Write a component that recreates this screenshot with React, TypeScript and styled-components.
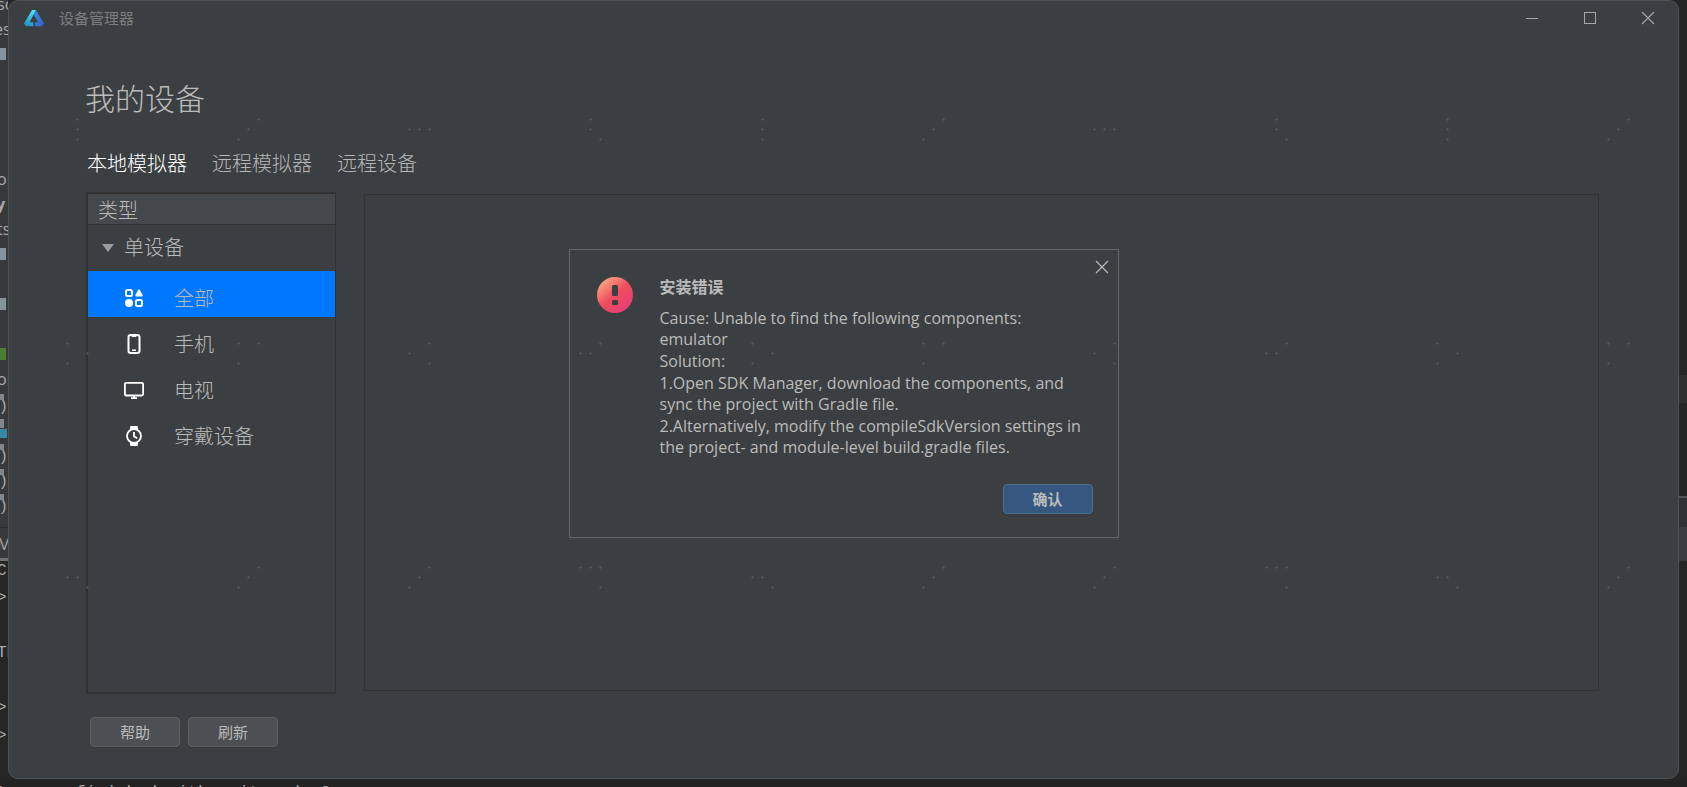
import React, { useState } from "react";
import styled, { createGlobalStyle, css } from "styled-components";

const GlobalStyle = createGlobalStyle`
  * { box-sizing: border-box; }
  body {
    margin: 0;
    background: #262626;
    color: #bbbbbb;
    font-family: "Open Sans", "Noto Sans CJK SC", sans-serif;
  }
  button { font-family: inherit; cursor: default; }
`;

/* ---------- desktop: the IDE showing round the window ---------- */

const Desktop = styled.div`
  position: relative;
  display: grid;
  grid-template-columns: 8px minmax(0, 1fr) 8px;
  grid-template-rows: minmax(779px, calc(100vh - 8px)) 8px;
  overflow: hidden;
`;

const Strip = styled.div<{ $side: "left" | "right" }>`
  position: relative;
  overflow: hidden;
  background: ${(p) =>
    p.$side === "left"
      ? "linear-gradient(#37393b 0 558px, #6e7074 558px 561px, #262626 561px)"
      : "linear-gradient(#272727 0 375px, #303030 375px 403px, #252525 403px 496px, #555 496px 498px, #303233 498px 527px, #3a3d3f 527px 561px, #262626 561px)"};
`;

const Fragment = styled.span<{ $top: number; $left: number; $bold?: boolean; $mono?: boolean }>`
  position: absolute;
  left: ${(p) => p.$left}px;
  top: ${(p) => p.$top}px;
  font-family: ${(p) => (p.$mono ? '"Liberation Mono", monospace' : "inherit")};
  font-size: 16px;
  line-height: 20px;
  font-weight: ${(p) => (p.$bold ? 700 : 400)};
  white-space: nowrap;
  color: #a7a9ab;
`;

const Block = styled.i<{ $top: number; $w: number; $h: number; $color: string }>`
  position: absolute;
  left: 0;
  top: ${(p) => p.$top}px;
  width: ${(p) => p.$w}px;
  height: ${(p) => p.$h}px;
  background: ${(p) => p.$color};
`;

const Console = styled.div`
  grid-column: 1 / -1;
  height: 8px;
  padding-top: 4px;
  overflow: hidden;
  text-indent: -6px;
  white-space: nowrap;
  font: 17px/20px "Liberation Mono", monospace;
  color: #a5a5a5;
  background: #232323;
`;

/* ---------- window ---------- */

const Window = styled.main`
  display: flex;
  flex-direction: column;
  min-width: 0;
  background: #3c3f41;
  border: 1px solid #505254;
  border-radius: 10px;
`;

const TitleBar = styled.header`
  display: flex;
  align-items: center;
  height: 34px;
  padding: 0 20px 0 15px;
`;

const AppName = styled.span`
  flex: 1;
  margin-left: 15px;
  font-size: 15px;
  line-height: 20px;
  color: #7b7d7f;
`;

const Controls = styled.div`
  display: flex;
  gap: 38px;
`;

const IconButton = styled.button`
  display: grid;
  place-items: center;
  width: 20px;
  height: 20px;
  padding: 0;
  border: 0;
  background: none;
  color: #a3a5a6;
`;

const Content = styled.div`
  flex: 1;
  display: flex;
  flex-direction: column;
  padding: 42px 79px 31px 76px;
`;

const Heading = styled.h1`
  margin: 0;
  font-size: 30px;
  line-height: 44px;
  font-weight: 300;
`;

const Tabs = styled.div`
  display: flex;
  gap: 25px;
  margin: 30px 0 15px 2px;
`;

const Tab = styled.button<{ $active?: boolean }>`
  padding: 0;
  border: 0;
  background: none;
  font-size: 20px;
  line-height: 26px;
  font-weight: 300;
  color: ${(p) => (p.$active ? "#ffffff" : "#b4b6b7")};
`;

const Panels = styled.div`
  flex: 1;
  display: flex;
  gap: 28px;
  margin-left: 1px;
`;

const Sidebar = styled.nav`
  flex: 0 0 250px;
  border: 2px solid #323232;
  border-right-width: 1px;
  font-size: 20px;
  font-weight: 300;
`;

const SidebarHead = styled.div`
  height: 31px;
  padding: 4px 0 0 10px;
  line-height: 26px;
  background: #45484a;
  border-bottom: 1px solid #323232;
`;

const treeRow = css`
  display: flex;
  align-items: center;
  width: 100%;
  height: 46px;
  border: 0;
  background: none;
  color: inherit;
  font-size: 20px;
  font-weight: 300;
  line-height: 30px;
  text-align: left;
`;

const GroupRow = styled.button`
  ${treeRow}
  gap: 10px;
  padding: 0 14px;
`;

const ItemRow = styled.button<{ $active?: boolean }>`
  ${treeRow}
  gap: 28px;
  padding: 8px 0 0 34px;
  background: ${(p) => (p.$active ? "#0077ff" : "none")};
`;

const ItemName = styled.span`
  padding-top: 2px;
`;

const Stage = styled.section`
  flex: 1;
  margin: 2px 0 3px;
  border: 1px solid #323232;
`;

const Actions = styled.footer`
  display: flex;
  gap: 8px;
  margin: 23px 0 0 5px;
`;

const Button = styled.button<{ $primary?: boolean }>`
  width: 90px;
  height: 30px;
  padding: 0;
  border: 1px solid ${(p) => (p.$primary ? "#4c708c" : "#5e6060")};
  border-radius: 4px;
  background: ${(p) => (p.$primary ? "#365880" : "#4c5052")};
  box-shadow: 0 1px 1px #36383a;
  color: #bbbbbb;
  font-size: 15px;
  font-weight: ${(p) => (p.$primary ? 700 : 400)};
  line-height: 20px;
`;

/* ---------- dialog ---------- */

const Overlay = styled.div`
  position: absolute;
  inset: 0;
  display: grid;
  place-items: center;
`;

const Dialog = styled.section`
  display: grid;
  grid-template-columns: 36px 1fr;
  column-gap: 27px;
  position: relative;
  width: 550px;
  padding: 26px 25px 23px 27px;
  background: #3c3f41;
  border: 1px solid #66696b;
`;

const DialogClose = styled(IconButton)`
  position: absolute;
  top: 7px;
  right: 6px;
  color: #bbbbbb;
`;

const DialogText = styled.div`
  font-size: 16px;
  line-height: 21px;
`;

const DialogTitle = styled.h2`
  margin: 0 0 10px;
  font-size: 16px;
  line-height: 22px;
  font-weight: 700;
`;

const Message = styled.p`
  margin: 0;

  & + & {
    margin-top: 1px;
  }
`;

const DialogActions = styled.div`
  grid-column: 1 / -1;
  display: flex;
  justify-content: flex-end;
  margin-top: 26px;
`;

const Sparkles = styled.svg`
  position: absolute;
  inset: 0;
  width: 100%;
  height: 100%;
  pointer-events: none;
`;

/* ---------- drawings ---------- */

const Logo = () => (
  <svg width="20" height="17" viewBox="0 0 20 17" aria-hidden="true">
    <defs>
      <linearGradient id="lgA" x1="0.6" y1="0" x2="0.3" y2="1">
        <stop offset="0" stopColor="#4fe3ea" />
        <stop offset="1" stopColor="#1c93c8" />
      </linearGradient>
      <linearGradient id="lgB" x1="0" y1="0" x2="1" y2="1">
        <stop offset="0" stopColor="#2f8fe6" />
        <stop offset="1" stopColor="#3a5fc9" />
      </linearGradient>
    </defs>
    <path d="M8 0h4L5.600 12.200H9.400V16.200H2L0 13.500z" fill="url(#lgA)" />
    <path d="M12 0L20 13.500L18 16.200H11V12.200H14.200L9.600 4.600z" fill="url(#lgB)" />
  </svg>
);

const Minimize = () => (
  <svg width="14" height="14" viewBox="0 0 14 14" stroke="currentColor">
    <path d="M1 7.500H13" />
  </svg>
);

const Maximize = () => (
  <svg width="14" height="14" viewBox="0 0 14 14" stroke="currentColor" fill="none">
    <rect x="1.500" y="1.500" width="11" height="11" />
  </svg>
);

const Cross = () => (
  <svg width="14" height="14" viewBox="0 0 14 14" stroke="currentColor" strokeWidth="1.200">
    <path d="M1 1L13 13M13 1L1 13" />
  </svg>
);

const Arrow = () => (
  <svg width="12" height="8" viewBox="0 0 12 8" fill="#9a9c9d">
    <path d="M0 0H12L6 8z" />
  </svg>
);

const AllIcon = () => (
  <svg width="24" height="24" viewBox="0 0 24 24" fill="none" stroke="#fff" strokeWidth="2">
    <rect x="4" y="4" width="6" height="6" rx="1.500" />
    <path d="M17 4.200L20 9.600H14z" fill="#fff" strokeLinejoin="round" strokeWidth="1.600" />
    <circle cx="7" cy="17" r="4" fill="#fff" stroke="none" />
    <rect x="14" y="14" width="6" height="6" rx="1.500" />
  </svg>
);

const PhoneIcon = () => (
  <svg width="24" height="24" viewBox="0 0 24 24" fill="none" stroke="#fff" strokeWidth="2">
    <rect x="6.500" y="3" width="11" height="18" rx="2.200" />
    <path d="M9.600 4.200H14.400M10 18.200H14" strokeWidth="1.400" />
  </svg>
);

const TvIcon = () => (
  <svg width="24" height="24" viewBox="0 0 24 24" fill="none" stroke="#fff" strokeWidth="1.800">
    <rect x="2.900" y="4.900" width="18.200" height="12.600" rx="1.200" />
    <path d="M9 20.200H15M12 18v2" />
  </svg>
);

const WatchIcon = () => (
  <svg width="24" height="24" viewBox="0 0 24 24" fill="none" stroke="#fff" strokeWidth="1.800">
    <circle cx="12" cy="12" r="7" />
    <path d="M7.800 5.600L8.400 2H15.600L16.200 5.600ZM7.800 18.400L8.400 22H15.600L16.200 18.400Z" fill="#fff" stroke="none" />
    <path d="M12 8V12.400L15.200 14.200" />
  </svg>
);

const ErrorIcon = () => (
  <svg width="36" height="38" viewBox="0 -1 36 38" role="img" aria-label="错误">
    <defs>
      <linearGradient id="err" x1="0.1" y1="0.1" x2="0.8" y2="0.95">
        <stop offset="0" stopColor="#fbab87" />
        <stop offset="0.5" stopColor="#ee4d5c" />
        <stop offset="1" stopColor="#e73e78" />
      </linearGradient>
    </defs>
    <circle cx="18" cy="18" r="18" fill="url(#err)" />
    <rect x="15" y="8" width="6" height="11" rx="1.500" fill="#3c3f41" />
    <rect x="15" y="23" width="6" height="5" rx="1.500" fill="#3c3f41" />
  </svg>
);

/* Four dot clusters per band; each cluster repeats every four columns. */
const BANDS: { y: number; shapes: number[][][] }[] = [
  {
    y: 120,
    shapes: [
      [[1, 0], [1, 1], [1, 2]],
      [[2, 0], [1, 1], [0, 2]],
      [[0, 1], [1, 1], [2, 1]],
      [[1, 0], [1, 1], [2, 2]],
    ],
  },
  {
    y: 344,
    shapes: [
      [[0, 0], [2, 1], [0, 2]],
      [[0, 0], [2, 0], [0, 2]],
      [[0, 1], [2, 0], [2, 2]],
      [[0, 1], [1, 1], [2, 0]],
    ],
  },
  {
    y: 568,
    shapes: [
      [[0, 1], [1, 1], [2, 2]],
      [[2, 0], [1, 1], [0, 2]],
      [[2, 0], [1, 1], [0, 2]],
      [[0, 0], [1, 0], [2, 0], [2, 2]],
    ],
  },
];

const Dots = () => (
  <Sparkles aria-hidden="true">
    {BANDS.map((band) =>
      Array.from({ length: 10 }, (_, i) =>
        band.shapes[i % 4].map(([dx, dy]) => {
          const x = 67 + Math.floor(i * 171.3) + dx * 10;
          const y = band.y + dy * 10;
          return (
            <path
              key={`${x}-${y}`}
              d={`M${x - 1} ${y - 0.5}h3M${x + 0.5} ${y - 2}v3`}
              stroke="#505355"
            />
          );
        })
      )
    )}
  </Sparkles>
);

/* ---------- data ---------- */

const TABS = ["本地模拟器", "远程模拟器", "远程设备"];

const DEVICES = [
  { name: "全部", Icon: AllIcon },
  { name: "手机", Icon: PhoneIcon },
  { name: "电视", Icon: TvIcon },
  { name: "穿戴设备", Icon: WatchIcon },
];

const FRAGMENTS: { top: number; left: number; text: string; bold?: boolean; mono?: boolean }[] = [
  { top: -6, left: -3, text: "sc" },
  { top: 19, left: -6, text: "es" },
  { top: 169, left: -3, text: "op" },
  { top: 194, left: -4, text: "y", bold: true },
  { top: 219, left: -3, text: "ts" },
  { top: 369, left: -3, text: "or" },
  { top: 397, left: -11, text: "()}", mono: true },
  { top: 447, left: -11, text: "()}", mono: true },
  { top: 472, left: -11, text: "()}", mono: true },
  { top: 497, left: -11, text: "()}", mono: true },
  { top: 534, left: -3, text: "M" },
  { top: 561, left: -3, text: "C", mono: true },
  { top: 588, left: -3, text: ">", mono: true },
  { top: 643, left: -3, text: "Th", mono: true },
  { top: 698, left: -3, text: ">", mono: true },
  { top: 726, left: -3, text: ">", mono: true },
];

const BLOCKS = [
  { top: 48, w: 6, h: 12, color: "#87939a" },
  { top: 248, w: 6, h: 12, color: "#87939a" },
  { top: 298, w: 6, h: 12, color: "#87939a" },
  { top: 348, w: 6, h: 12, color: "#4b7d33" },
  { top: 394, w: 4, h: 6, color: "#7d878d" },
  { top: 419, w: 4, h: 9, color: "#7d878d" },
  { top: 429, w: 7, h: 9, color: "#3a87a5" },
  { top: 444, w: 4, h: 6, color: "#7d878d" },
  { top: 469, w: 4, h: 6, color: "#7d878d" },
  { top: 494, w: 4, h: 6, color: "#7d878d" },
  { top: 527, w: 8, h: 1, color: "#2b2b2b" },
];

export default function App() {
  const [tab, setTab] = useState(0);
  const [device, setDevice] = useState(0);

  return (
    <>
      <GlobalStyle />
      <Desktop>
        <Strip $side="left" aria-hidden="true">
          {FRAGMENTS.map((f) => (
            <Fragment key={f.top} $top={f.top} $left={f.left} $bold={f.bold} $mono={f.mono}>
              {f.text}
            </Fragment>
          ))}
          {BLOCKS.map((b) => (
            <Block key={b.top} $top={b.top} $w={b.w} $h={b.h} $color={b.color} />
          ))}
        </Strip>

        <Window>
          <TitleBar>
            <Logo />
            <AppName>设备管理器</AppName>
            <Controls>
              <IconButton aria-label="最小化"><Minimize /></IconButton>
              <IconButton aria-label="最大化"><Maximize /></IconButton>
              <IconButton aria-label="关闭"><Cross /></IconButton>
            </Controls>
          </TitleBar>

          <Content>
            <Heading>我的设备</Heading>
            <Tabs role="tablist">
              {TABS.map((name, i) => (
                <Tab
                  key={name}
                  role="tab"
                  aria-selected={i === tab}
                  $active={i === tab}
                  onClick={() => setTab(i)}
                >
                  {name}
                </Tab>
              ))}
            </Tabs>

            <Panels>
              <Sidebar>
                <SidebarHead>类型</SidebarHead>
                <GroupRow aria-expanded="true">
                  <Arrow />
                  单设备
                </GroupRow>
                {DEVICES.map(({ name, Icon }, i) => (
                  <ItemRow key={name} $active={i === device} onClick={() => setDevice(i)}>
                    <Icon />
                    <ItemName>{name}</ItemName>
                  </ItemRow>
                ))}
              </Sidebar>
              <Stage />
            </Panels>

            <Actions>
              <Button>帮助</Button>
              <Button>刷新</Button>
            </Actions>
          </Content>
        </Window>

        <Strip $side="right" aria-hidden="true" />
        <Console aria-hidden="true">Process finished with exit code 0</Console>

        <Overlay>
          <Dialog role="alertdialog" aria-labelledby="dialog-title">
            <DialogClose aria-label="关闭"><Cross /></DialogClose>
            <ErrorIcon />
            <DialogText>
              <DialogTitle id="dialog-title">安装错误</DialogTitle>
              <Message>
                Cause: Unable to find the following components:
                <br />
                emulator
              </Message>
              <Message>Solution:</Message>
              <Message>
                1.Open SDK Manager, download the components, and
                <br />
                sync the project with Gradle file.
              </Message>
              <Message>
                2.Alternatively, modify the compileSdkVersion settings in
                <br />
                the project- and module-level build.gradle files.
              </Message>
            </DialogText>
            <DialogActions>
              <Button $primary>确认</Button>
            </DialogActions>
          </Dialog>
        </Overlay>
        <Dots />
      </Desktop>
    </>
  );
}
